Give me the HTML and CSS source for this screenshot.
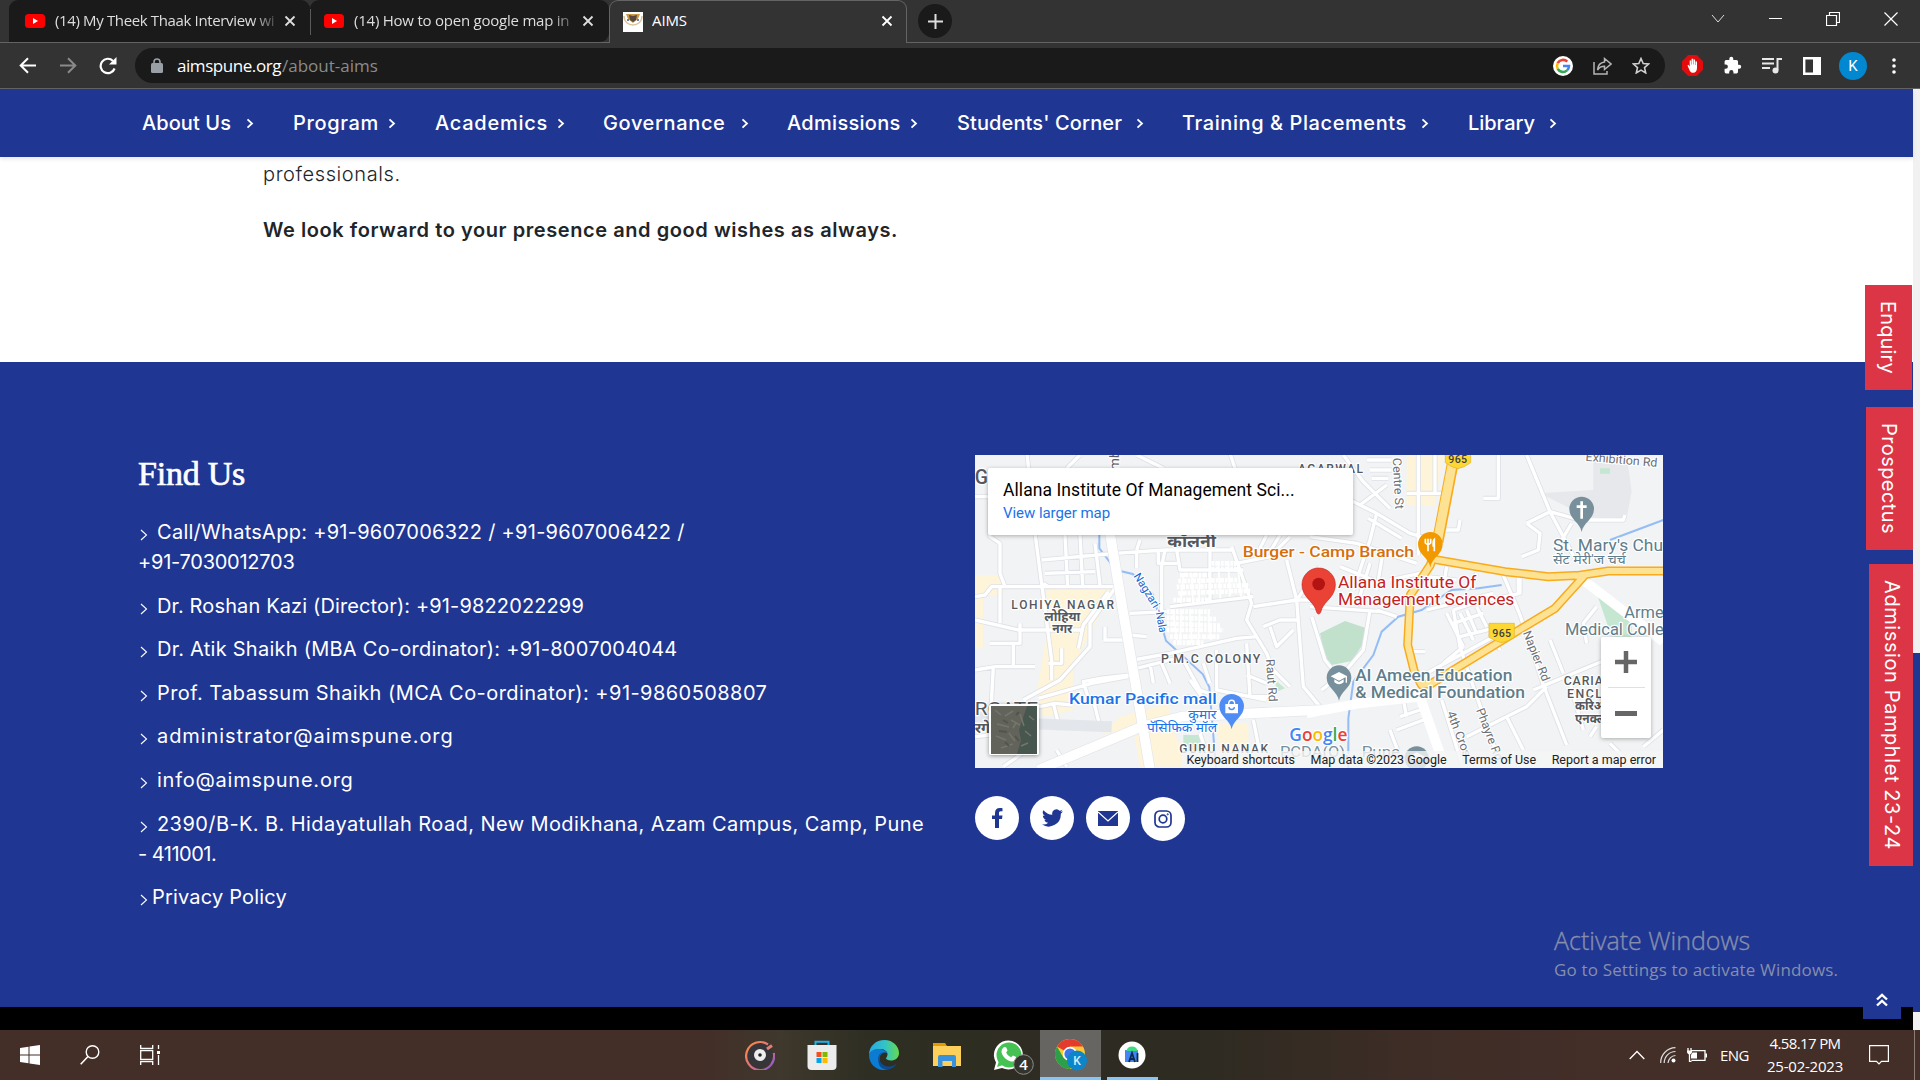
FILE: index.html
```html
<!DOCTYPE html>
<html lang="en">
<head>
<meta charset="utf-8">
<title>AIMS</title>
<link rel="stylesheet" href="styles.css">
</head>
<body>
<svg class="defs" width="0" height="0">
  <defs>
    <symbol id="x" viewBox="0 0 12 12"><path d="M1.5 1.5l9 9M10.500 1.500l-9 9" fill="none" stroke="currentColor" stroke-width="1.8"/></symbol>
    <symbol id="yt" viewBox="0 0 20 14"><rect width="20" height="14" rx="3.500" fill="#f00"/><path d="M8 4v6l5-3z" fill="#fff"/></symbol>
    <symbol id="chev" viewBox="0 0 8 10"><path d="M1.500 .8L6 5 1.500 9.200" fill="none" stroke="currentColor" stroke-width="1.800"/></symbol>
    <symbol id="thin" viewBox="0 0 8 12"><path d="M1 1l5.500 5L1 11" fill="none" stroke="currentColor" stroke-width="1.100"/></symbol>
  </defs>
</svg>

<header class="tabs">
  <div class="tab tab-one"><svg class="yt"><use href="#yt"/></svg><span class="title t-one">(14) My Theek Thaak Interview wi</span><svg class="close"><use href="#x"/></svg></div>
  <div class="tab tab-two"><svg class="yt"><use href="#yt"/></svg><span class="title t-two">(14) How to open google map in</span><svg class="close"><use href="#x"/></svg></div>
  <div class="tab tab-active">
    <svg class="fav" viewBox="0 0 20 20"><rect width="20" height="20" fill="#fff"/><path d="M1 4C1 16 19 16 19 4" fill="none" stroke="#d9c69d" stroke-width="1.500"/><path d="M3 2h14l-2 5-5 4-5-4z" fill="#c79a4a"/><path d="M6 3l4 1 4-1-1 5-3 2-3-2z" fill="#59463f"/><path d="M4 7h2v2H4zM14 7h2v2h-2z" fill="#6c7db4"/></svg>
    <span class="title t-three">AIMS</span><svg class="close"><use href="#x"/></svg>
  </div>
  <div class="plus"><svg width="17" height="17" viewBox="0 0 17 17"><path d="M8.500 1v15M1 8.500h15" stroke="#ddd" stroke-width="2"/></svg></div>
  <div class="window-controls">
    <svg width="14" height="9" viewBox="0 0 14 9"><path d="M1 1l6 7 6-7" fill="none" stroke="#ddd"/></svg>
    <svg width="13" height="13" viewBox="0 0 13 13"><path d="M0 6.500h13" stroke="#fff"/></svg>
    <svg width="14" height="14" viewBox="0 0 14 14"><path d="M.5 3.500h10v10H.5zM3.500 3.500v-3h10v10h-3" fill="none" stroke="#fff" stroke-width="1.200"/></svg>
    <svg width="14" height="14" viewBox="0 0 14 14"><path d="M.5.500l13 13M13.500.500l-13 13" stroke="#fff" stroke-width="1.200"/></svg>
  </div>
</header>

<div class="toolbar">
  <div class="history">
    <svg width="18" height="17" viewBox="0 0 18 17"><path d="M17 8.500H2M9 1.200L1.700 8.500 9 15.800" fill="none" stroke="#fff" stroke-width="2"/></svg>
    <svg width="18" height="17" viewBox="0 0 18 17"><path d="M1 8.500h15M9 1.200l7.300 7.300L9 15.800" fill="none" stroke="#8a8a8a" stroke-width="2"/></svg>
    <svg width="18" height="18" viewBox="0 0 18 18"><path d="M15.600 11.500A7.200 7.200 0 1 1 14 3.900" fill="none" stroke="#fff" stroke-width="2.200"/><path d="M17.500 0v7.500H10z" fill="#fff"/></svg>
  </div>
  <div class="address">
    <svg class="lock" width="12" height="15" viewBox="0 0 12 15"><rect y="5" width="12" height="10" rx="1.500" fill="#9aa0a6"/><path d="M3 6V4a3 3 0 0 1 6 0v2" fill="none" stroke="#9aa0a6" stroke-width="1.600"/></svg>
    <span class="host">aimspune.org</span><span class="path">/about-aims</span>
    <div class="address-icons">
      <svg width="20" height="20" viewBox="0 0 20 20"><circle cx="10" cy="10" r="10" fill="#fff"/><g fill="none" stroke-width="2.600"><path d="M14.300 5.700A6 6 0 0 0 4.700 7.200" stroke="#ea4335"/><path d="M4.700 7.200a6 6 0 0 0 0 5.600" stroke="#fbbc05"/><path d="M4.700 12.800a6 6 0 0 0 9.300 1.600" stroke="#34a853"/><path d="M14 14.400A6 6 0 0 0 16 10h-6" stroke="#4285f4"/></g></svg>
      <svg width="19" height="18" viewBox="0 0 19 18"><path d="M1 5v12h13v-3M11.500 1.500L18 7l-6.500 5.500V9.200C8 9.200 6 10.500 4.500 13 4.800 8.500 7.500 5.500 11.500 5z" fill="none" stroke="#b5b5b5" stroke-width="1.500"/></svg>
      <svg width="18" height="17" viewBox="0 0 18 17"><path d="M9 1.500l2.200 5 5.400.5-4.100 3.600 1.200 5.300L9 13.100l-4.700 2.800 1.200-5.300L1.400 7l5.400-.5z" fill="none" stroke="#d0d0d0" stroke-width="1.600"/></svg>
    </div>
  </div>
  <div class="extensions">
    <svg width="21" height="21" viewBox="0 0 21 21"><path d="M6.200 0h8.600L21 6.200v8.600L14.800 21H6.200L0 14.800V6.200z" fill="#e30b0b"/><path d="M5.500 10.500l1-.7 1.200 2V5.500h1.500v4h.4V3.800h1.600v5.700h.4v-5h1.500v5.500h.4V6.500H15V13c0 3-1.500 4.800-3.800 4.800-2.700 0-3.500-2-5.700-7.300z" fill="#fff"/></svg>
    <svg width="19" height="19" viewBox="0 0 24 24"><path d="M20.500 11H19V7a2 2 0 0 0-2-2h-4V3.500a2.500 2.500 0 0 0-5 0V5H4a2 2 0 0 0-2 2v3.800h1.500a2.700 2.700 0 0 1 0 5.400H2V20a2 2 0 0 0 2 2h3.800v-1.500a2.700 2.700 0 0 1 5.400 0V22H17a2 2 0 0 0 2-2v-4h1.500a2.500 2.500 0 0 0 0-5z" fill="#fff"/></svg>
    <svg width="20" height="17" viewBox="0 0 20 17"><path d="M0 2h12M0 6.500h12M0 11h8M20 2h-4.500v11" fill="none" stroke="#e8e8e8" stroke-width="2"/><circle cx="13.500" cy="13.500" r="3" fill="#e8e8e8"/></svg>
    <svg class="panel" width="18" height="18" viewBox="0 0 18 18"><path d="M1.200 1.200h15.600v15.600H1.200z" fill="none" stroke="#fff" stroke-width="2.400"/><path d="M10 1h7v16h-7z" fill="#fff"/></svg>
    <span class="avatar">K</span>
    <svg width="4" height="18" viewBox="0 0 4 18"><circle cx="2" cy="3" r="1.800" fill="#fff"/><circle cx="2" cy="9" r="1.800" fill="#fff"/><circle cx="2" cy="15" r="1.800" fill="#fff"/></svg>
  </div>
</div>

<div class="page">
  <div class="site">
    <nav class="nav">
      <a class="n1">About Us<svg><use href="#chev"/></svg></a>
      <a class="n2">Program<svg><use href="#chev"/></svg></a>
      <a class="n3">Academics<svg><use href="#chev"/></svg></a>
      <a class="n4">Governance<svg><use href="#chev"/></svg></a>
      <a class="n5">Admissions<svg><use href="#chev"/></svg></a>
      <a class="n6">Students' Corner<svg><use href="#chev"/></svg></a>
      <a class="n7">Training &amp; Placements<svg><use href="#chev"/></svg></a>
      <a class="n8">Library<svg><use href="#chev"/></svg></a>
    </nav>
    <main class="intro">
      <p class="light">professionals.</p>
      <p class="strong">We look forward to your presence and good wishes as always.</p>
    </main>
    <footer class="footer">
      <section class="find">
        <h2>Find Us</h2>
        <ul>
          <li><svg><use href="#thin"/></svg><span class="c1">Call/WhatsApp: +91-9607006322 / +91-9607006422 /</span><br><span class="c2">+91-7030012703</span></li>
          <li><svg><use href="#thin"/></svg><span class="c3">Dr. Roshan Kazi (Director): +91-9822022299</span></li>
          <li><svg><use href="#thin"/></svg><span class="c4">Dr. Atik Shaikh (MBA Co-ordinator): +91-8007004044</span></li>
          <li><svg><use href="#thin"/></svg><span class="c5">Prof. Tabassum Shaikh (MCA Co-ordinator): +91-9860508807</span></li>
          <li><svg><use href="#thin"/></svg><span class="c6">administrator@aimspune.org</span></li>
          <li><svg><use href="#thin"/></svg><span class="c7">info@aimspune.org</span></li>
          <li><svg><use href="#thin"/></svg><span class="c8">2390/B-K. B. Hidayatullah Road, New Modikhana, Azam Campus, Camp, Pune</span><br><span class="c9">- 411001.</span></li>
          <li class="policy"><svg><use href="#thin"/></svg><span class="c10">Privacy Policy</span></li>
        </ul>
      </section>
      <section class="reach">
        <div class="map">
          <svg class="canvas" width="688" height="313" viewBox="0 0 688 313">
            <defs>
              <g id="west-roads">
                <path d="M170 0l6 60M290 55l40-40M500 15l80 40M780 10l20 60M15 140h60M60 130v130l30 20v90l15 40M15 440l30-5 20-25h370M195 250l50 380v60M215 330l220-20 150-10h200M285 255l8 155M330 255l8 150M375 280l15 125M225 370l150-5M220 400l15 10M510 270l-10 30M500 305v50M565 300v40h60M585 300l-10 50v200M620 300l10 60h190M720 300v150M785 290l60 170-15 50 60 100 20 50 50 50M600 470l250-30M850 470l130-20 70-100M800 340l100-20 60-60M480 490l110-5M480 555l50 5M400 570h65M405 570v-40M15 510l130 30h190M90 410v110M60 580h90v-60M130 580v70M15 660l60-10 120 0M70 650l-5 90 0 100M235 640h40v-45M435 415L360 520v70l-90 100-110 60M415 425l-75 100-15 70M205 745l160-45 110-20M490 630l110-20 200-45 60-5M480 660l140-35M540 640l10 60M575 640l25 60M640 630l50 90 50 20M700 640l20 60M740 600v120l150 30M830 580l10 160h60M890 700l-60-25M660 690l50 70M650 740l70 10M360 760l-20-65 50-10 90-10M75 800l180-40 50 5M250 760l20 80M370 750l20 80M15 860l100-10M100 950l100-70M260 900l30 50M690 850l30 90M850 810l20 100M950 330l30 120 20 260 50 60M970 450h80M880 530l50-20h50M900 530l20 60 50-50M890 255l-20 40M930 255l-30 50"/>
              </g>
              <g id="east-roads">
                <path d="M100 15l60 80 80 80M170 30h75M180 60h65M185 85h50M150 165l80-60M60 120l140 70 100 60 70 20M325 15v300M290 130h115M375 15v110M405 240h40l5-30M520 145h45V15M650 15l70 170 80 150M720 185l90 25h130l5-15M650 220l40 30-5 50-50 20M650 220l70-35M755 270l30-50M0 260l140 20 180 60M175 205l100 60M200 190l-20 80M130 420l50-150M90 350l100 40M180 340l-40 130M220 300l-20 120M0 470l215 15M5 500l40 130 40 50-50 40M180 480l-20 120-60 70M350 480l200-50M350 380l90 10M410 350l-10 60M430 480l60-20 140-30v-45M410 490l50 100M450 490l40 80M470 480l30 70M500 470l30 60M430 520l90-30M450 560l120-30M570 600l-30-50M310 605h35M350 670l220-120M400 640l60-50M430 480l20 110 40 120 70 200M580 375l50 120 70 210 70 180M500 370l-30 50M625 380v50M720 570l40 100M670 720l240-100M470 860l180-90 60-60M395 750l60 190M590 800l50 100M240 840l30 80M270 800l60-20M260 840l80-30M830 580l-10-60 40-50M840 860l20-30M900 880l60 60M1000 890l60-50M280 750l10 50M780 700l40 140M240 390l90-20M260 500l-60-20"/>
              </g>
            </defs>
            <rect width="688" height="313" fill="#f1f3f4"/>
            <g transform="translate(-5 -5) scale(.33333)">
              <path d="M15 375h85v60H40v160H15zM230 420l200-10-120 240v130l-90 20-20-70 30-180zM450 800l150-40v60l60 130h-150l-20-110-90 10z" fill="#fdf4da"/>
              <path d="M740 820h95v90h-85z" fill="#fdf4da"/>
              <path d="M640 855h50v50h-50zM915 690l30 25-25 10z" fill="#c5e6d0"/>
              <path d="M388 255v40l50 65 50 12 60 60 40 140 110 100 20 40 20 240" fill="none" stroke="#94bdf6" stroke-width="6"/>
              <use href="#west-roads" class="casing"/><use href="#west-roads" class="road"/>
              <path d="M420 250l40 240 45 260 35 210M205 960l310-130 120-30 420-20M15 800l130 20 280 10" class="highway-casing"/>
              <path d="M420 250l40 240 45 260 35 210M205 960l310-130 120-30 420-20" class="highway"/>
              <g fill="none" stroke="#fff" stroke-width="14">
                <path stroke-dasharray="8 3 14 3" d="M630 375l90 0M625 393l180-3M620 411l215-5M625 430l215-8M610 450h110M725 340h80M725 358h80M590 485h130M590 503l150 4M590 521l160 6M590 540l170 0M600 560h150M610 578h90"/>
                <path stroke-width="5" d="M640 370l-8 90M665 370l4 90M690 370l-4 90M745 345l6 100M775 340l5 100M805 360l8 80M610 480l10 90M635 480l-5 90M660 480l6 100M690 480l-6 100M715 490l8 80"/>
              </g>
            </g>
            <g transform="translate(335 -5) scale(.33333)">
              <path d="M850 15h100l15 110-15 80-120-5-140-70 160-10z" fill="#e7e8ec"/>
              <path d="M290 15h110l-25 150h-85z" fill="#fdf4da"/>
              <path d="M870 55h30v16h-30zM860 430l105 75v55h-60z" fill="#c5e6d0"/>
              <path d="M30 550l75-37 60 20v40l-40 60-75 15z" fill="#c1e1cd"/>
              <path d="M575 405l-70 10-80 5-90 60-70 20-50 45-25 70-60 80-15 110v150M900 270l160-60" fill="none" stroke="#94bdf6" stroke-width="6"/>
              <use href="#east-roads" class="casing"/><use href="#east-roads" class="road"/>
              <path d="M-10 790l160-30 180-20 70 200M800 375l260 200" class="highway"/>
              <path d="M433 15l-50 260-22 70-60 90-8 150 20 80 22 40 30-5 320-195 50-30 90-100-110 5-130-15-230-40M795 378l100-15h165" class="trunk-casing"/>
              <path d="M433 15l-50 260-22 70-60 90-8 150 20 80 22 40 30-5 320-195 50-30 90-100-110 5-130-15-230-40M795 378l100-15h165" class="trunk"/>
              <path d="M433 15l-50 260" class="trunk-casing wide"/><path d="M433 10l-51 265" class="trunk wide"/>
            </g>
            <g transform="translate(-5 -5) scale(.33333)" class="labels">
              <text x="14" y="103" font-size="58" font-weight="500">G</text>
              <text x="14" y="795" font-size="54" lengthAdjust="spacingAndGlyphs" textLength="190">RGATE</text>
              <text x="14" y="850" font-size="44" font-weight="700">रगेट</text>
              <text x="592" y="292" font-size="46" font-weight="700" lengthAdjust="spacingAndGlyphs" textLength="146">कॉलनी</text>
              <text x="124" y="476" font-size="36" class="area" textLength="308">LOHIYA NAGAR</text>
              <text x="223" y="512" font-size="37" font-weight="700" lengthAdjust="spacingAndGlyphs" textLength="108">लोहिया</text>
              <text x="247" y="550" font-size="37" font-weight="700" lengthAdjust="spacingAndGlyphs" textLength="60">नगर</text>
              <text x="573" y="639" font-size="37" class="area" textLength="298">P.M.C COLONY</text>
              <text x="628" y="908" font-size="36" class="area" textLength="266">GURU NANAK</text>
              <text transform="translate(446 60) rotate(-88)" font-size="40">mb</text>
              <text transform="translate(888 628) rotate(86)" font-size="36" fill="#6b6f75" lengthAdjust="spacingAndGlyphs" textLength="128">Raut Rd</text>
              <g fill="#1967d2" font-size="34"><text transform="translate(490 378) rotate(58)" lengthAdjust="spacingAndGlyphs" textLength="116">Nagzari</text><text transform="translate(556 480) rotate(80)" lengthAdjust="spacingAndGlyphs" textLength="70">-Nala</text></g>
              <g fill="#1a73e8" font-weight="500"><text x="297" y="763" font-size="46" lengthAdjust="spacingAndGlyphs" textLength="443">Kumar Pacific mall</text><text x="655" y="807" font-size="38" font-weight="400" lengthAdjust="spacingAndGlyphs" textLength="84">कुमार</text><text x="531" y="846" font-size="38" font-weight="400" lengthAdjust="spacingAndGlyphs" textLength="210">पॅसिफिक मॉल</text></g>
              <text x="984" y="68" font-size="36" class="area" textLength="195">AGARWAL</text>
              <text x="818" y="320" font-size="46" font-weight="500" fill="#d56e0c" lengthAdjust="spacingAndGlyphs" textLength="514">Burger - Camp Branch</text>
              <text x="930" y="920" font-size="46" fill="#78909c" lengthAdjust="spacingAndGlyphs" textLength="205">PCDA(O),</text>
              <text x="1175" y="920" font-size="46" fill="#78909c" lengthAdjust="spacingAndGlyphs" textLength="115">Pune</text>
              <g transform="translate(785 770)"><path d="M0 68c-4-28-37-38-37-69a37 37 0 0 1 74 0c0 31-33 41-37 69z" fill="#4f8df5"/><path d="M-17-6h34v24h-34z" fill="#fff" stroke="#fff" stroke-width="4"/><path d="M-9-8c0-15 18-15 18 0" fill="none" stroke="#fff" stroke-width="4"/><path d="M-8 1c0 10 16 10 16 0" fill="none" stroke="#4f8df5" stroke-width="4"/></g>
            </g>
            <g transform="translate(335 -5) scale(.33333)" class="labels">
              <text transform="translate(248 24) rotate(87)" font-size="36" fill="#6b6f75" lengthAdjust="spacingAndGlyphs" textLength="154">Centre St</text>
              <text transform="translate(826 32) rotate(5)" font-size="36" fill="#6b6f75" lengthAdjust="spacingAndGlyphs" textLength="216">Exhibition Rd</text>
              <text transform="translate(638 548) rotate(68)" font-size="36" fill="#6b6f75" lengthAdjust="spacingAndGlyphs" textLength="160">Napier Rd</text>
              <text transform="translate(410 788) rotate(69)" font-size="36" fill="#6b6f75" lengthAdjust="spacingAndGlyphs" textLength="145">4th Cros</text>
              <text transform="translate(498 780) rotate(69)" font-size="36" fill="#6b6f75" lengthAdjust="spacingAndGlyphs" textLength="165">Phayre Rd</text>
              <g fill="#607d8b">
                <text x="729" y="303" font-size="47" lengthAdjust="spacingAndGlyphs" textLength="330">St. Mary's Chu</text><text x="729" y="342" font-size="37" lengthAdjust="spacingAndGlyphs" textLength="218">सेंट मेरी'ज चर्च</text>
                <text x="943" y="503" font-size="47" lengthAdjust="spacingAndGlyphs" textLength="118">Arme</text><text x="765" y="554" font-size="47" lengthAdjust="spacingAndGlyphs" textLength="296">Medical Colle</text>
                <text x="136" y="692" font-size="47" font-weight="500" lengthAdjust="spacingAndGlyphs" textLength="471">Al Ameen Education</text><text x="136" y="745" font-size="47" font-weight="500" lengthAdjust="spacingAndGlyphs" textLength="509">&amp; Medical Foundation</text>
              </g>
              <g fill="#c5221f"><text x="84" y="413" font-size="48" lengthAdjust="spacingAndGlyphs" textLength="415">Allana Institute Of</text><text x="84" y="466" font-size="48" lengthAdjust="spacingAndGlyphs" textLength="529">Management Sciences</text></g>
              <text x="761" y="706" font-size="37" class="area" textLength="118">CARIA</text><text x="771" y="744" font-size="37" class="area" textLength="105">ENCL</text><text x="795" y="781" font-size="36" font-weight="700">करिअ</text><text x="795" y="820" font-size="36" font-weight="700">एनक्ल</text>
              <g class="shield"><path d="M406 10h76v28q-18 14-38 18-20-4-38-18zM537 520h76v42q-18 12-38 16-20-4-38-16z"/><text x="415" y="40" textLength="56">965</text><text x="547" y="562" textLength="56">965</text></g>
              <g transform="translate(361 284)"><path d="M0 68c-4-28-37-38-37-69a37 37 0 0 1 74 0c0 31-33 41-37 69z" fill="#f29900"/><path d="M-15-18v13q8 8 16 0v-13M-7-18v38M12 20v-36q-5 4-3 22" fill="none" stroke="#fff" stroke-width="5"/></g>
              <g transform="translate(815 178)"><path d="M0 68c-4-28-37-38-37-69a37 37 0 0 1 74 0c0 31-33 41-37 69z" fill="#78909c"/><path d="M0-24v52M-15-8h30" stroke="#fff" stroke-width="8"/></g>
              <g transform="translate(87 684)"><path d="M0 68c-4-28-37-38-37-69a37 37 0 0 1 74 0c0 31-33 41-37 69z" fill="#78909c"/><path d="M0-18l25 13L0 8l-25-13zM-14 4v9q14 12 28 0V4L0 12zM20-4h4v18h-4z" fill="#fff"/></g>
              <g transform="translate(320 925)"><circle r="36" fill="#78909c"/><path d="M0-18l25 13L0 8l-25-13z" fill="#fff"/></g>
              <path d="M26 492c-5 0-6-6-10-17-9-22-40-36-40-71a50 50 0 0 1 100 0c0 35-31 49-40 71-4 11-5 17-10 17z" fill="#ea4335" stroke="#c5221f" stroke-width="2"/><circle cx="26" cy="402" r="19" fill="#b31412"/>
              <text x="-62" y="874" font-size="56" class="logo" lengthAdjust="spacingAndGlyphs" textLength="174"><tspan fill="#4285f4">G</tspan><tspan fill="#ea4335">o</tspan><tspan fill="#fbbc04">o</tspan><tspan fill="#4285f4">g</tspan><tspan fill="#34a853">l</tspan><tspan fill="#ea4335">e</tspan></text>
            </g>
          </svg>
          <div class="card"><b>Allana Institute Of Management Sci...</b><a>View larger map</a></div>
          <div class="satellite"><svg width="46" height="48" viewBox="0 0 46 48"><rect width="46" height="48" fill="#62645c"/><path d="M36 0h10v48H26l4-14-2-10z" fill="#47564f"/><path d="M4 4l6 5M14 10l8-5M6 18l12 3M20 14l9 5M5 30l10 4M18 27l6 8M10 42l12-4M29 8l4 12M34 25l6 5M30 40l7-3M38 10l5 4M22 22l3-5" stroke="#74766c" stroke-width="1.500"/><path d="M12 14l5 3M8 25l8 1M25 9l3-3M14 36l4 4M24 30l4 5" stroke="#525549" stroke-width="2"/></svg></div>
          <div class="zoom"><span><svg width="22" height="22" viewBox="0 0 22 22"><path d="M11 0v22M0 11h22" stroke="#666" stroke-width="4.500"/></svg></span><i></i><span><svg width="22" height="5"><rect width="22" height="5" fill="#666"/></svg></span></div>
          <div class="legal"><span>Keyboard shortcuts</span><span>Map data ©2023 Google</span><span>Terms of Use</span><span>Report a map error</span></div>
        </div>
        <div class="social">
          <a><svg width="11" height="20" viewBox="0 0 11 20"><path d="M3 20v-9H0V7.500h3V5C3 1.800 4.800 0 7.800 0 9 0 10.500.2 10.500.2v3H9C7.300 3.200 7 4 7 5v2.500h3.500L10 11H7v9z" fill="currentColor"/></svg></a>
          <a><svg width="21" height="18" viewBox="0 0 24 20"><path d="M24 2.400a10 10 0 0 1-2.800.8A5 5 0 0 0 23.300.500a10 10 0 0 1-3.100 1.200 4.900 4.900 0 0 0-8.400 4.500A14 14 0 0 1 1.700 1a4.900 4.900 0 0 0 1.500 6.600A5 5 0 0 1 1 7v.1a4.900 4.900 0 0 0 4 4.800 5 5 0 0 1-2.300.1 4.900 4.900 0 0 0 4.600 3.400A10 10 0 0 1 0 17.500 14 14 0 0 0 21.500 5A10 10 0 0 0 24 2.400z" fill="currentColor"/></svg></a>
          <a><svg width="20" height="15" viewBox="0 0 20 15"><path d="M0 0h20v15H0z" fill="currentColor"/><path d="M0 1l10 9L20 1" fill="none" stroke="#fff" stroke-width="1.300"/></svg></a>
          <a class="ig"><svg width="18" height="18" viewBox="0 0 18 18" fill="none" stroke="currentColor"><rect x="1" y="1" width="16" height="16" rx="4.500" stroke-width="1.700"/><circle cx="9" cy="9" r="3.800" stroke-width="1.700"/><circle cx="13.700" cy="4.300" r=".6"/></svg></a>
        </div>
      </section>
    </footer>
    <div class="strip"></div>
    <a class="side enquiry"><span>Enquiry</span></a>
    <a class="side prospectus"><span>Prospectus</span></a>
    <a class="side pamphlet"><span>Admission Pamphlet 23-24</span></a>
    <a class="top"><svg width="12" height="14" viewBox="0 0 12 14"><path d="M1 6.500l5-4.700 5 4.700M1 12.500l5-4.700 5 4.700" fill="none" stroke="#fff" stroke-width="2.400"/></svg></a>
    <div class="watermark"><b>Activate Windows</b><span>Go to Settings to activate Windows.</span></div>
  </div>
  <div class="scroll"><div class="thumb"></div></div>
</div>

<div class="taskbar">
  <div class="system">
    <svg width="20" height="20" viewBox="0 0 20 20"><path d="M0 3l8.500-1.200v7.700H0zM9.500 1.600L20 0v9.500H9.500zM0 10.500h8.500v7.700L0 17zM9.500 10.500H20V20L9.500 18.400z" fill="#fff"/></svg>
    <svg width="20" height="20" viewBox="0 0 20 20"><circle cx="12.500" cy="7" r="6.300" fill="none" stroke="#fff" stroke-width="1.400"/><path d="M8 11.500L.7 19.300" stroke="#fff" stroke-width="1.600"/></svg>
    <svg width="20" height="20" viewBox="0 0 20 20"><path d="M.7 0v3.500h12V0M.7 5.700h12v8.600H.7zM.7 20v-3.500h12V20M18.500 0v4M18.500 10v10" fill="none" stroke="#fff" stroke-width="1.300"/><path d="M17 6h3v3h-3z" fill="#fff"/></svg>
  </div>
  <div class="apps">
    <div><svg width="30" height="30" viewBox="0 0 30 30"><defs><linearGradient id="ring" x1="0" y1="0" x2="1" y2="1"><stop stop-color="#ff8d3c"/><stop offset=".5" stop-color="#dd7480"/><stop offset="1" stop-color="#7b57d8"/></linearGradient></defs><circle cx="15" cy="15" r="12.500" fill="#35353a"/><path d="M23 4.500A14 14 0 1 0 28.800 13" fill="none" stroke="url(#ring)" stroke-width="2.200"/><path d="M22 9l5-3.500" stroke="#e08078" stroke-width="3"/><circle cx="15" cy="15" r="6" fill="#eee"/><circle cx="15" cy="15" r="1.800" fill="#222"/></svg></div>
    <div><svg width="30" height="30" viewBox="0 0 30 30"><path d="M8.500 6V1.800h13V6" fill="none" stroke="#22b0f0" stroke-width="2"/><path d="M.5 5h29v21q0 4-4 4h-21q-4 0-4-4z" fill="#ececec"/><path d="M9.500 12h5v5h-5z" fill="#f25022"/><path d="M15.500 12h5v5h-5z" fill="#7fba00"/><path d="M9.500 18h5v5h-5z" fill="#00a4ef"/><path d="M15.500 18h5v5h-5z" fill="#ffb900"/></svg></div>
    <div><svg width="30" height="30" viewBox="0 0 30 30"><defs><linearGradient id="edge"><stop stop-color="#27a9e6"/><stop offset=".55" stop-color="#34c4c4"/><stop offset="1" stop-color="#66db4a"/></linearGradient></defs><path d="M0 15C0 6 7 0 15.500 0 24 0 30 6.500 30 13c0 5-4 7.500-8 7.500-3 0-5-1-5-2.200 0-.8 1.500-1.500 1.500-4C18.500 11 15 9 11 9 5 9 1 12 0 15z" fill="url(#edge)"/><path d="M0 15C1 11 5 9 10 9c5 0 8 2.500 8.500 4.500C16 11 11 13 10.500 18 10 24 15 28.500 21 28c-2 1.300-4 2-6.500 2C6 30 0 23 0 15z" fill="#0c7bd2"/><path d="M14 12.200c-3 1-4 4-3.500 7C11.500 24 16 27 21 26.500c3-.3 5-1.500 6.500-3-2 6-13 9-17 2C8 20 9 13 14 12.200z" fill="#0d4b91"/></svg></div>
    <div><svg width="28" height="24" viewBox="0 0 28 24"><path d="M0 0h12l2 3H0z" fill="#e19c00"/><path d="M0 3h28v20H0z" fill="#fcd05b"/><path d="M5 24V14q0-2 2-2h14q2 0 2 2v10h-4v-6H9.500v6z" fill="#3a92dc"/></svg></div>
    <div><svg width="50" height="40" viewBox="0 0 50 40"><path d="M10 35l2-7.500A14.500 14.500 0 1 1 18 33z" fill="#fff"/><circle cx="25" cy="20" r="12.500" fill="#46c254"/><path d="M13 32l2-6 4 4z" fill="#46c254"/><path d="M19 13c1-1.500 3-1.500 3.500 0l1 2.500-1.300 2c1 2.500 3 4 5 4.800l1.800-1.800 3.200 1.600c1 3-2.500 5-5 4.400-5-1-9.500-6-9.700-9.500 0-2 .5-3 1.500-4z" fill="#fff"/><circle cx="39.500" cy="29.500" r="9.800" fill="#34342f" stroke="#8d8d88"/><text x="39.500" y="35" text-anchor="middle" class="badge-text">4</text></svg></div>
    <div class="open current"><svg width="34" height="34" viewBox="0 0 34 34"><circle cx="15" cy="16" r="15" fill="#fcc934"/><path d="M15 16L2 8.500A15 15 0 0 1 28 8.500H15z" fill="#e33b2e"/><path d="M15 31A15 15 0 0 1 2 8.500l6.500 11.200L15 23.500 20.500 21z" fill="#2c9f4b"/><circle cx="15" cy="16" r="7.200" fill="#fff"/><circle cx="15" cy="16" r="5.600" fill="#3b78e7"/><circle cx="22" cy="22.500" r="10" fill="#0b86cb"/><text x="22" y="27" text-anchor="middle" class="profile-text">K</text></svg></div>
    <div class="open"><svg width="28" height="28" viewBox="0 0 28 28"><circle cx="14" cy="14" r="13.500" fill="#fff"/><path d="M7 9h13v12H7z" fill="#4285f4"/><path d="M8.500 10a5.500 4.500 0 0 1 11 0z" fill="#3ddc84"/><path d="M11 21l3-9 3 9M12 18h4M19.500 12v9" fill="none" stroke="#0c2b4d" stroke-width="1.800"/></svg></div>
  </div>
  <div class="tray">
    <svg class="up" width="16" height="10" viewBox="0 0 16 10"><path d="M.7 9L8 1.500 15.300 9" fill="none" stroke="#fff" stroke-width="1.300"/></svg>
    <svg class="wifi" width="16" height="16" viewBox="0 0 16 16"><g fill="none" stroke="#ddd" stroke-width="1.200"><path d="M.7 16A15 15 0 0 1 15.500.700M4.200 16A11.500 11.500 0 0 1 15.500 4.500M8 16a8 8 0 0 1 7.500-7.500"/></g><circle cx="13.500" cy="13.500" r="2" fill="#fff"/></svg>
    <svg class="battery" width="20" height="14" viewBox="0 0 20 14"><path d="M4.500 2.700H18v9.600H4.500M19.400 5.500v4M2.500 6v7.300h2M1 0v3M4 0v3" fill="none" stroke="#fff" stroke-width="1.300"/><path d="M0 2.500h5v2q-1 2-2.500 2T0 4.500zM5.500 4.500H10v6H4V7z" fill="#fff"/></svg>
    <span class="lang">ENG</span>
    <div class="clock"><span class="time">4.58.17 PM</span><span class="date">25-02-2023</span></div>
    <svg class="note" width="20" height="20" viewBox="0 0 20 20"><path d="M.6.600h18.800v15.800H12.500L10 19l-2.500-2.600H.6z" fill="none" stroke="#fff" stroke-width="1.200"/></svg>
    <i class="peek"></i>
  </div>
</div>
</body>
</html>
```
FILE: styles.css
```css
* { box-sizing: border-box; }
body { margin: 0; width: 1920px; height: 1080px; overflow: hidden; display: flex; flex-direction: column; background: #333; color: #fff; font-family: "Open Sans", sans-serif; }
svg { display: block; flex: none; }
.defs { position: absolute; }
p, h2, ul { margin: 0; padding: 0; }

/* Browser tabs */
.tabs { height: 43px; flex: none; display: flex; border-bottom: 1px solid #646464; }
.tab { height: 42px; display: flex; align-items: center; color: #dedede; font-size: 15px; }
.tab .title { white-space: nowrap; overflow: hidden; margin-left: 10px; flex: 1; line-height: 38px; padding-bottom: 2px; }
.tab .yt { width: 20px; height: 14px; }
.tab .close { width: 12px; height: 12px; }
.tab-one { margin-left: 9px; width: 301px; padding: 0 14px 0 16px; background: #1a1a1a; border-radius: 9px 9px 0 0; }
.tab-two { width: 299px; padding: 0 15px 0 14px; background: #1a1a1a; border-radius: 9px 9px 9px 0; position: relative; }
.tab-two::before { content: ""; width: 1px; height: 26px; background: #5a5a5a; position: absolute; left: 0; top: 9px; }
.tab-one .title, .tab-two .title { -webkit-mask-image: linear-gradient(90deg, #000 90%, #0004); mask-image: linear-gradient(90deg, #000 90%, #0004); margin-right: 10px; }
.t-one { letter-spacing: -.36px; }
.t-two { letter-spacing: -.23px; }
.tab .t-three { letter-spacing: -.1px; color: #fff; margin-left: 9px; padding-bottom: 4px; }
.tab-active { width: 298px; height: 43px; padding: 0 13px; background: #333; border: 1px solid #646464; border-bottom: 0; border-radius: 9px 9px 0 0; }
.tab-active .close, .tab-active .fav { margin-bottom: 2px; color: #fff; }
.tab-active .fav { margin-bottom: 1px; }
.fav { width: 20px; height: 20px; }
.plus { width: 34px; height: 34px; margin: 4px 0 0 11px; border-radius: 50%; background: #1a1a1a; display: flex; align-items: center; justify-content: center; }
.window-controls { margin-left: auto; margin-right: 22px; height: 37px; display: flex; align-items: center; gap: 44px; }

/* Browser toolbar */
.toolbar { height: 46px; flex: none; display: flex; align-items: center; border-bottom: 1px solid #646464; }
.history { display: flex; align-items: center; width: 135px; padding-left: 19px; gap: 22px; }
.address { width: 1530px; height: 35px; border-radius: 18px; background: #1a1a1a; display: flex; align-items: center; padding: 0 15px 0 16px; font-size: 17px; }
.host { margin-left: 14px; letter-spacing: -.44px; color: #fff; width: 105px; white-space: nowrap; }
.path { color: #8b8b8b; }
.address-icons { margin-left: auto; display: flex; align-items: center; gap: 20px; }
.extensions { display: flex; align-items: center; margin-left: 17px; gap: 20px; }
.panel { margin-left: 1px; }
.avatar { width: 28px; height: 28px; border-radius: 50%; background: #0288d1; font: 15px/28px Roboto, sans-serif; text-align: center; margin: 0 5px 0 -2px; }

/* Web page */
.page { height: 941px; flex: none; display: flex; background: #fff; font-family: Inter, sans-serif; font-size: 20px; line-height: 30px; }
.site { width: 1913px; position: relative; white-space: nowrap; }
.nav { height: 68px; background: #1f3693; display: flex; align-items: center; padding-left: 142px; font-weight: 500; box-shadow: 0 2px 4px rgba(0,0,0,.1); }
.nav a { display: flex; align-items: center; justify-content: space-between; }
.nav svg { width: 8px; height: 11px; }
.n1 { width: 112px; margin-right: 39px; letter-spacing: .08px; }
.n2 { width: 103px; margin-right: 39px; letter-spacing: .65px; }
.n3 { width: 130px; margin-right: 38px; letter-spacing: .74px; }
.n4 { width: 146px; margin-right: 38px; letter-spacing: .62px; }
.n5 { width: 131px; margin-right: 39px; letter-spacing: .3px; }
.n6 { width: 187px; margin-right: 38px; letter-spacing: .12px; }
.n7 { width: 247px; margin-right: 39px; letter-spacing: .58px; }
.n8 { width: 89px; letter-spacing: -.04px; }
.intro { height: 205px; padding: 2px 0 0 263px; color: #212529; }
.light { font-weight: 300; letter-spacing: .6px; margin-bottom: 26px; }
.strong { font-weight: 600; letter-spacing: .57px; }

.footer { height: 645px; background: #1f3693; display: flex; padding: 93px 0 0 138px; }
.find { width: 837px; }
.find h2 { font: 400 34px/40px "Liberation Serif", serif; letter-spacing: -.23px; -webkit-text-stroke: .7px #fff; margin: -1px 0 23px; }
.find ul { list-style: none; display: flex; flex-direction: column; gap: 13.600px; }
.find li svg { display: inline-block; width: 8px; height: 12px; margin: 0 9px -2px 2px; }
.find .policy svg { margin-right: 4px; }
.c1 { letter-spacing: .27px; }
.c2 { letter-spacing: -.25px; }
.c3 { letter-spacing: .13px; }
.c4 { letter-spacing: .25px; }
.c5 { letter-spacing: .44px; }
.c6 { letter-spacing: .93px; }
.c7 { letter-spacing: .76px; }
.c8 { letter-spacing: .42px; }
.c9 { letter-spacing: -.5px; }
.c10 { letter-spacing: .19px; }

/* Map */
.map { position: relative; width: 688px; height: 313px; overflow: hidden; font-family: Roboto, sans-serif; }
.casing { fill: none; stroke: #dee1e6; stroke-width: 15; stroke-linejoin: round; }
.road { fill: none; stroke: #fff; stroke-width: 10; stroke-linejoin: round; }
.highway-casing { fill: none; stroke: #e3e6ea; stroke-width: 33; }
.highway { fill: none; stroke: #fff; stroke-width: 29; stroke-linejoin: round; }
.trunk-casing { fill: none; stroke: #f9ab1c; stroke-width: 27; stroke-linejoin: round; }
.trunk { fill: none; stroke: #fde293; stroke-width: 18; stroke-linejoin: round; }
.trunk-casing.wide { stroke-width: 35; }
.trunk.wide { stroke-width: 27; }
.labels { font-family: Roboto, "Noto Sans", sans-serif; fill: #55595e; }
.labels text { paint-order: stroke; stroke: #fff; stroke-width: 7px; stroke-linejoin: round; }
.labels .area { font-weight: 500; }
.shield path { fill: #fdd835; stroke: #e0b520; stroke-width: 2; }
.shield text { font-size: 32px; font-weight: 500; fill: #3c4043; stroke: none; }
.labels .logo { font-family: "Open Sans", sans-serif; font-weight: 600; }
.card { position: absolute; left: 13px; top: 13px; width: 365px; height: 67px; padding: 10px 15px; background: #fff; border-radius: 2px; box-shadow: 0 1px 4px rgba(0,0,0,.3); display: flex; flex-direction: column; }
.card b { font: 400 17.500px/25px Roboto, sans-serif; letter-spacing: .08px; color: #000; }
.card a { font-size: 15px; line-height: 20px; letter-spacing: -.05px; color: #1a73e8; }
.satellite { position: absolute; left: 14px; top: 249px; width: 50px; height: 51px; border: 2px solid #fff; border-radius: 2px; box-shadow: 0 1px 4px rgba(0,0,0,.4); }
.zoom { position: absolute; left: 626px; top: 182px; width: 50px; height: 101px; background: #fff; border-radius: 2px; box-shadow: 0 1px 4px rgba(0,0,0,.3); display: flex; flex-direction: column; align-items: center; }
.zoom span { flex: 1; display: flex; align-items: center; }
.zoom i { width: 37px; height: 1px; background: #e0e0e0; }
.legal { position: absolute; right: 0; bottom: 0; height: 17px; padding: 0 7px 0 5px; display: flex; gap: 15.500px; background: rgba(245,245,245,.8); color: #222; font-size: 12.500px; line-height: 17px; }
.social { display: flex; gap: 11.300px; margin-top: 28px; }
.social a { width: 44px; height: 44px; border-radius: 50%; background: #fff; color: #1f3693; display: flex; align-items: center; justify-content: center; }
.social .ig { margin-top: 1px; }
.strip { height: 23px; background: #000; }

/* Floating controls */
.side { position: absolute; background: #dc3545; display: flex; align-items: center; justify-content: center; writing-mode: vertical-rl; }
.enquiry { left: 1865px; top: 196px; width: 47px; height: 105px; letter-spacing: .17px; padding-right: 2px; }
.prospectus { left: 1866px; top: 318px; width: 47px; height: 143px; letter-spacing: .42px; padding-right: 2px; }
.pamphlet { left: 1869px; top: 474.500px; width: 44px; height: 302.500px; letter-spacing: .59px; }
.pamphlet span { margin-left: 2px; }
.top { position: absolute; left: 1863px; top: 892px; width: 38px; height: 38px; background: #1f3693; display: flex; align-items: center; justify-content: center; }
.watermark { position: absolute; left: 1554px; top: 833px; display: flex; flex-direction: column; font-family: "Open Sans", sans-serif; color: #868eac; }
.watermark b { font-size: 25px; line-height: 36px; font-weight: 300; -webkit-text-stroke: .35px #868eac; }
.watermark span { font-size: 17px; line-height: 24px; letter-spacing: .16px; }
.scroll { width: 7px; background: #f1f1f1; padding-top: 564px; }
.thumb { height: 359px; background: #1f3693; }

/* Taskbar */
.taskbar { height: 50px; flex: none; display: flex; background: linear-gradient(90deg, #432e28 0, #432e28 700px, #3f382c 780px, #2e2e22 870px, #2e2b22 1200px, #3e2d26 1420px, #432e28 1600px); }
.system { width: 729px; display: flex; align-items: center; gap: 40px; padding-left: 20px; }
.apps { display: flex; }
.apps div { width: 62.200px; display: flex; align-items: center; justify-content: center; }
.apps .open { border-bottom: 3px solid #85c6f7; padding-top: 2px; }
.apps .current { width: 61px; background: #676561; padding-left: 4px; margin-right: 6px; }
.apps .open:last-child { width: 51px; }
.badge-text { font: 600 15px "Open Sans", sans-serif; fill: #fff; }
.profile-text { font: 500 12px Roboto, sans-serif; fill: #d6ebf8; }
.tray { margin-left: auto; display: flex; align-items: center; font-size: 15px; }
.wifi { margin-left: 15px; }
.battery { margin-left: 11px; }
.lang { margin-left: 13px; letter-spacing: -.52px; width: 30px; }
.clock { width: 80px; margin-left: 15px; display: flex; flex-direction: column; align-items: center; line-height: 23px; }
.time { letter-spacing: -.62px; }
.date { letter-spacing: -.23px; }
.note { margin-left: 24px; }
.peek { width: 1px; height: 50px; background: #8a7d78; margin: 0 5px 0 25px; }
```
